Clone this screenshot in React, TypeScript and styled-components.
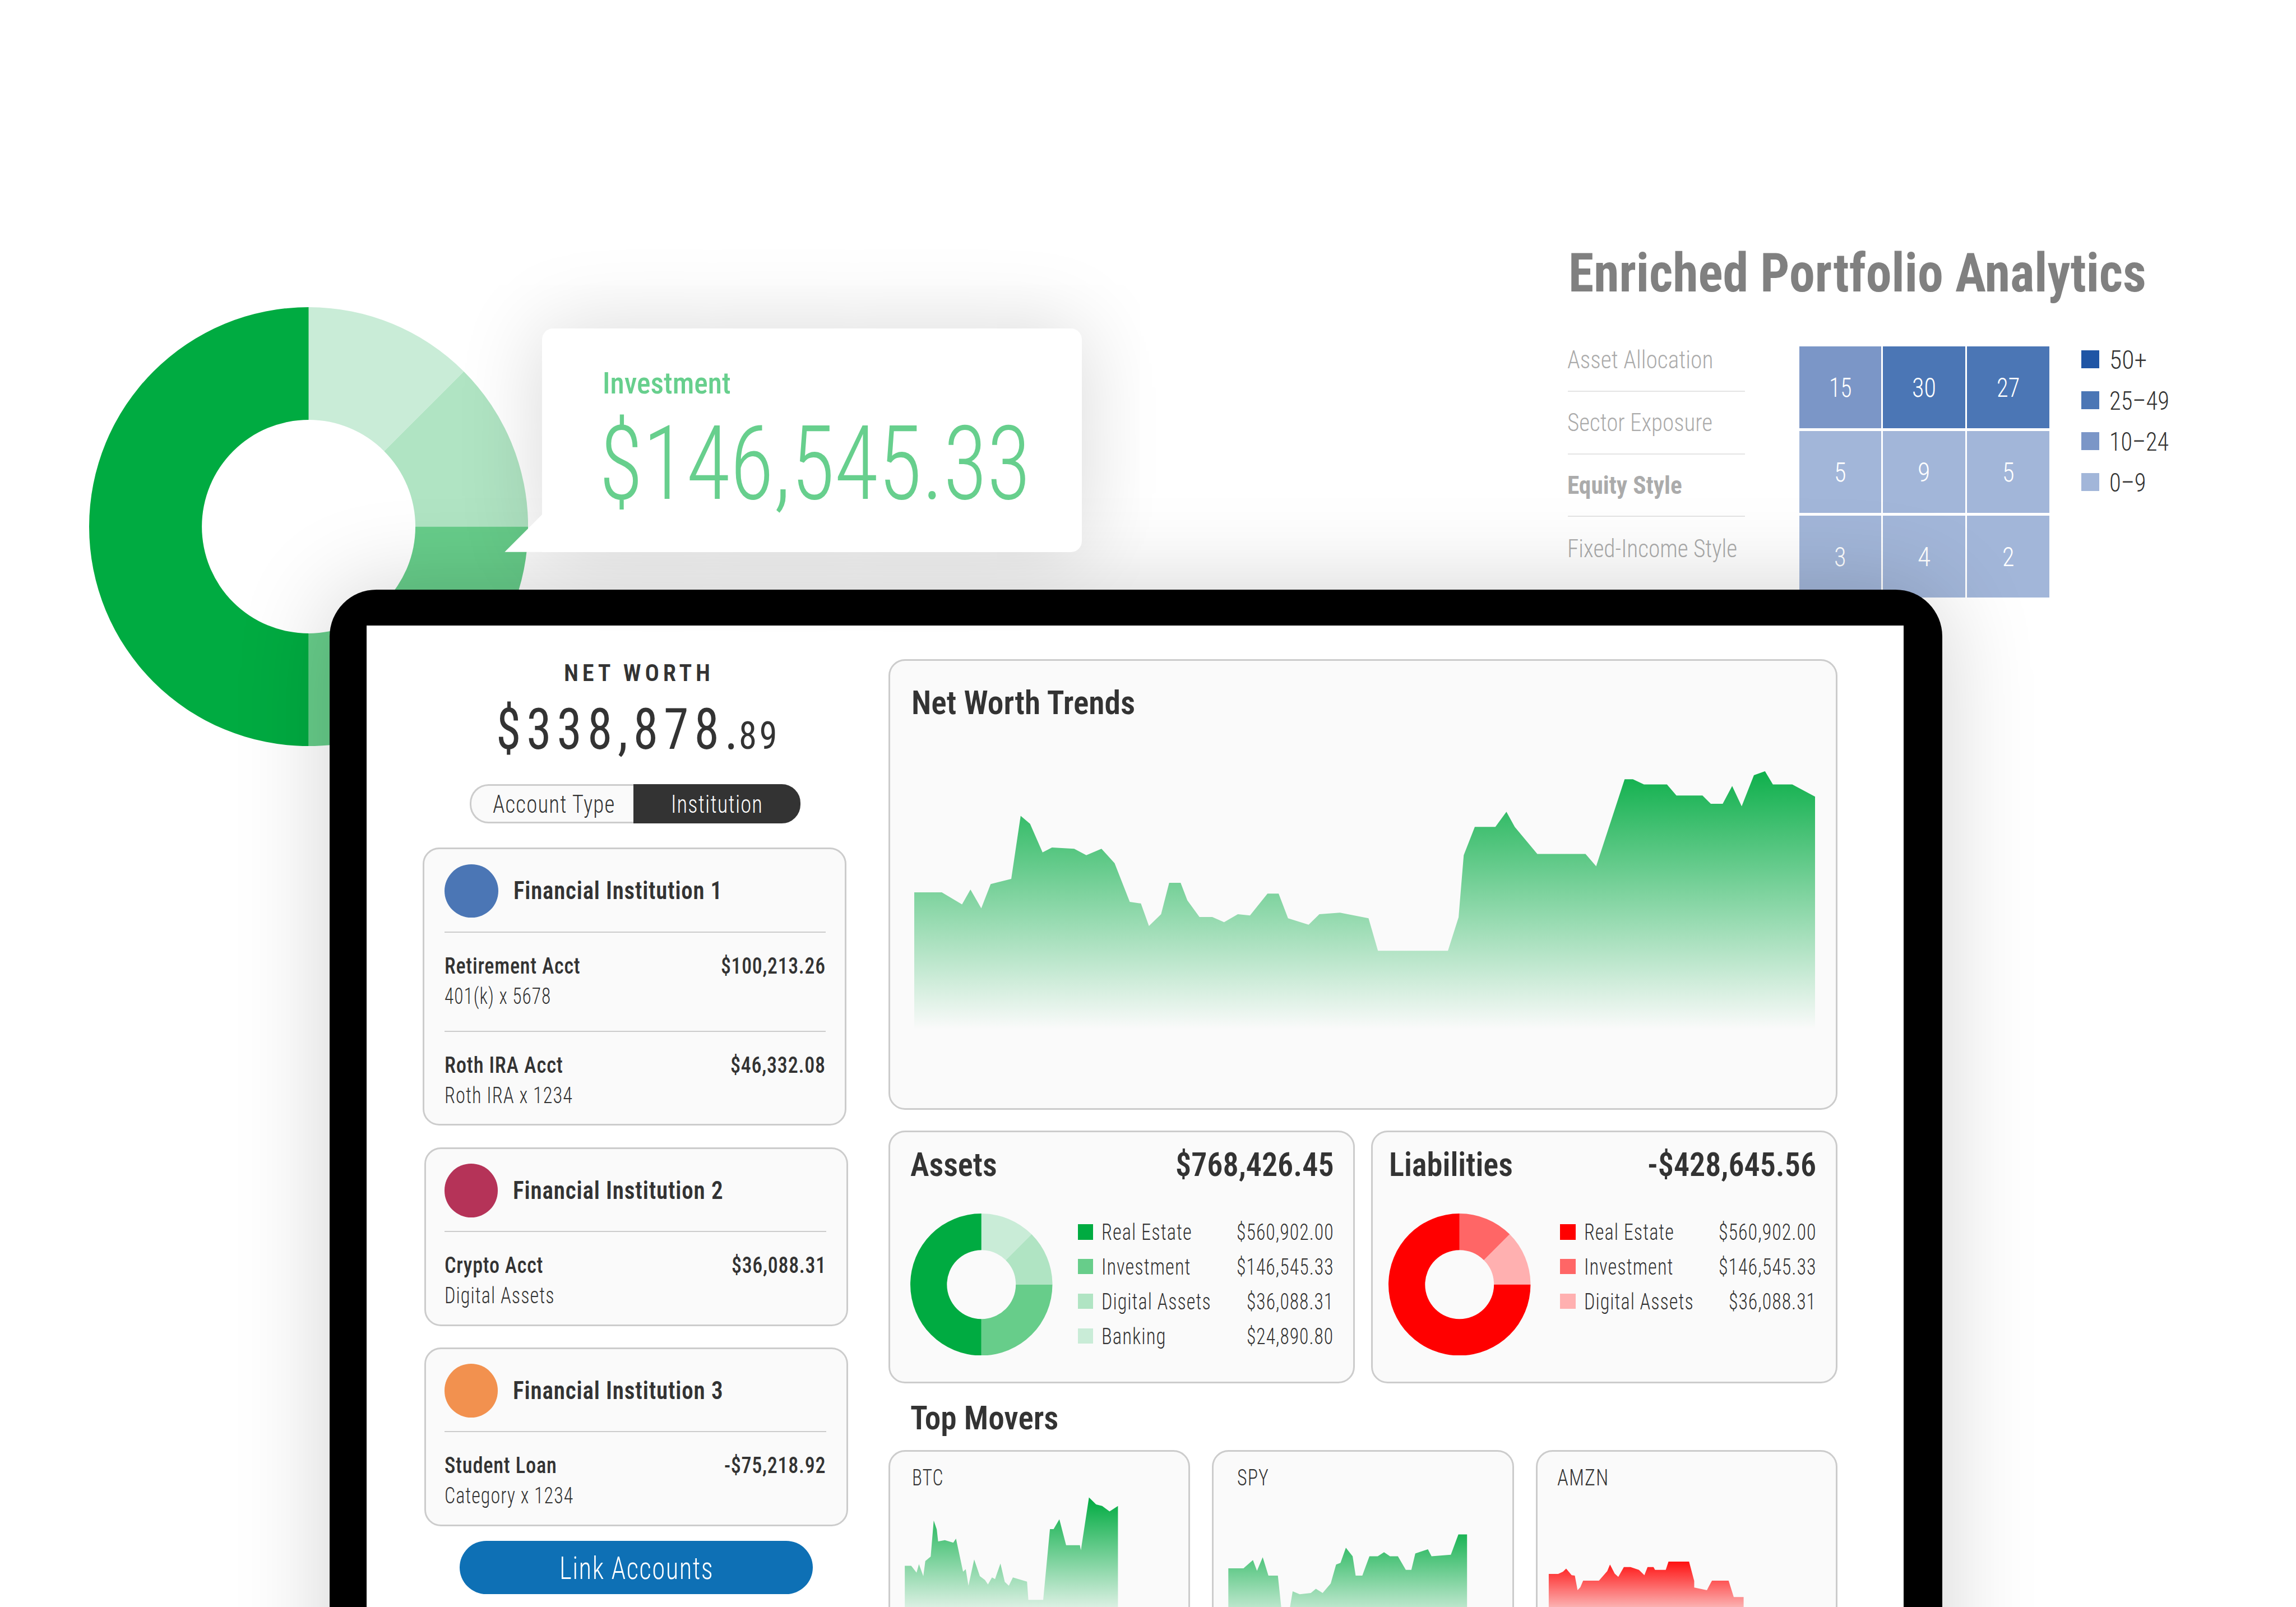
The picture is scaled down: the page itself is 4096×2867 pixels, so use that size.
import React, { useLayoutEffect, useRef, useState } from 'react';
import styled, { createGlobalStyle } from 'styled-components';

// 1rem = 10 design units
const GlobalStyle = createGlobalStyle`
  *, *::before, *::after { box-sizing: border-box; }
  html { font-size: 8.192px; }
  body {
    margin: 0;
    background: #fff;
    color: #333;
    font-family: 'Roboto Condensed', 'Roboto', 'Liberation Sans', sans-serif;
  }
`;

// ── Text ──────────────────────────────────────────────────────
const TextBox = styled.div<{ $w: number }>`
  display: flex;
  flex: none;
  width: calc(${({ $w }) => $w / 10}rem + 0.09em);
  margin: 0 -0.045em;
  line-height: 1;
  white-space: nowrap;
`;

const Run = styled.span`
  display: block;
  flex: none;
  padding-top: 0.03em;
  margin-bottom: -0.03em;
  transform-origin: 0 50%;
`;

const PageTitle    = styled(TextBox)`font-size: 11.88rem; font-weight: 700; color: #808080;`;
const SectionTitle = styled(TextBox)`font-size: 7.15rem; font-weight: 600;`;
const MenuText     = styled(TextBox)<{ $bold?: boolean }>`
  font-size: 5.35rem;
  font-weight: ${({ $bold }) => ($bold ? 700 : 300)};
  color: #ababab;
`;
const CellText     = styled(TextBox)`font-size: 5.8rem; font-weight: 300; color: #fff;`;
const KeyText      = styled(TextBox)`font-size: 5.7rem; font-weight: 300;`;
const CalloutLabel = styled(TextBox)`font-size: 6.6rem; font-weight: 500; color: #67cf8d;`;
const CalloutValue = styled(TextBox)`font-size: 22.5rem; font-weight: 300; color: #67cf8d;`;
const Overline     = styled(TextBox)`font-size: 5.27rem; font-weight: 600; letter-spacing: 0.16em;`;
const WorthText    = styled(TextBox)`font-size: 12.5rem; font-weight: 400; letter-spacing: 0.11em;`;
const CentsText    = styled(TextBox)`font-size: 8.37rem; font-weight: 400; letter-spacing: 0.07em;`;
const ToggleText   = styled(TextBox)`font-size: 5.4rem; font-weight: 300; letter-spacing: 0.03em;`;
const CardTitle    = styled(TextBox)`font-size: 5.4rem; font-weight: 600; letter-spacing: 0.02em;`;
const SmallText    = styled(TextBox)`
  width: calc(${({ $w }) => $w / 10}rem + 0.05em);
  margin-left: 0;
  font-size: 4.88rem;
`;
const StrongText   = styled(SmallText)`font-weight: 500; letter-spacing: 0.02em;`;
const LightText    = styled(SmallText)`font-weight: 300; letter-spacing: 0.03em;`;
const ButtonText   = styled(TextBox)`font-size: 6.7rem; font-weight: 300; letter-spacing: 0.03em; color: #fff;`;

interface FitProps {
  as?:      any;
  w:        number;
  bold?:    boolean;
  children: React.ReactNode;
}

// Stretches a run of text horizontally so it fills the given width
const Fit: React.FC<FitProps> = ({ as: Kind = LightText, w, bold, children }) => {
  const ref = useRef<HTMLSpanElement>(null);
  const [scale, setScale] = useState(1);

  useLayoutEffect(() => {
    const run = ref.current!;
    const tracking = parseFloat(getComputedStyle(run).letterSpacing) || 0;
    const box = run.parentElement!.getBoundingClientRect().width;
    setScale(box / (run.offsetWidth - tracking));
  }, [w]);

  return (
    <Kind $w={w} $bold={bold}>
      <Run ref={ref} style={{ transform: `scaleX(${scale})` }}>{children}</Run>
    </Kind>
  );
};

// ── Stage ─────────────────────────────────────────────────────
const Stage = styled.main`
  position: relative;
  width: 500rem;
  height: 350rem;
  overflow: hidden;
  background: #fff;
`;

const BigDonut = styled.div`
  position: absolute; left: 19.4rem; top: 66.85rem;
`;

const DonutSvg = styled.svg<{ $size: number }>`
  display: block;
  flex: none;
  width: ${({ $size }) => $size / 10}rem;
  height: ${({ $size }) => $size / 10}rem;
`;

// ── Analytics ─────────────────────────────────────────────────
const Analytics = styled.section`
  position: absolute; left: 341.4rem; top: 53.2rem;
  padding-left: 0.7rem;
`;

const AnalyticsBody = styled.div`
  display: flex;
  align-items: flex-start;
  margin: 6.55rem 0 0 -0.7rem;
`;

const Menu = styled.nav`
  width: 38.6rem;
  margin-right: 11.8rem;
`;

const MenuItem = styled.div`
  display: flex; align-items: center;
  height: 13.66rem;
  padding-left: 0.15rem;
  border-bottom: 0.3rem solid #e4e4e4;
  &:last-child { border-bottom: none; }
`;

const HeatGrid = styled.div`
  display: grid;
  grid-template-columns: repeat(3, 17.85rem);
  grid-auto-rows: 17.83rem;
  gap: 0.58rem 0.45rem;
  margin-top: 3.84rem;
`;

const HeatCell = styled.div<{ $bg: string }>`
  display: flex; align-items: center; justify-content: center;
  background: ${({ $bg }) => $bg};
`;

const RangeKey = styled.ul`
  list-style: none;
  margin: 2.2rem 0 0 6.97rem;
  padding: 0;
`;

const RangeItem = styled.li`
  display: flex; align-items: center;
  height: 8.9rem;
  gap: 2.4rem;
`;

const Swatch = styled.span<{ $bg: string; $size?: number }>`
  flex: none;
  width: ${({ $size = 3.95 }) => $size}rem;
  height: ${({ $size = 3.95 }) => $size}rem;
  background: ${({ $bg }) => $bg};
`;

// ── Callout ───────────────────────────────────────────────────
const Callout = styled.aside`
  position: absolute; left: 118rem; top: 71.5rem;
  width: 117.6rem; height: 48.7rem;
  padding: 8.5rem 0 0 13.5rem;
  background: #fff;
  border-radius: 2.4rem 2.4rem 2.4rem 0;
  box-shadow: 0 0 18.5rem rgba(0,0,0,0.16);
  &::before {
    content: '';
    position: absolute; left: -8.1rem; bottom: 0;
    width: 8.3rem; height: 8.3rem;
    background: #fff;
    clip-path: polygon(0 100%, 100% 0, 100% 100%);
  }
`;

const CalloutGap = styled.div`height: 2.4rem;`;

// ── Tablet ────────────────────────────────────────────────────
const Tablet = styled.div`
  position: absolute; left: 71.8rem; top: 128.4rem;
  width: 351.2rem; height: 260rem;
  padding: 7.8rem 8.4rem 0 8rem;
  background: #000;
  border-radius: 10.2rem;
  box-shadow: 0 0 20.5rem rgba(0,0,0,0.18);
`;

const Screen = styled.div`
  display: flex;
  align-items: flex-start;
  height: 100%;
  padding: 0 0 0 12.2rem;
  background: #fff;
`;

const AccountsColumn = styled.div`
  display: flex; flex-direction: column; align-items: center;
  flex: none;
  width: 92.65rem;
  padding-top: 7.6rem;
`;

const InsightsColumn = styled.div`
  flex: none;
  width: 206.65rem;
  margin-left: 8.85rem;
  padding-top: 7.35rem;
`;

const WorthRow = styled.div`
  display: flex; align-items: baseline;
  gap: 1.2rem;
  margin: 3.2rem 0 6.05rem;
  padding-left: 0.8rem;
`;

const OverlineWrap = styled.div`padding-left: 0.8rem;`;

const Toggle = styled.div`
  display: flex;
  height: 8.45rem;
  margin-bottom: 5.25rem;
`;

const ToggleOption = styled.button<{ $active?: boolean }>`
  display: flex; align-items: center; justify-content: center;
  width: ${({ $active }) => ($active ? '36.4rem' : '35.6rem')};
  padding: 0;
  font-family: inherit;
  color: ${({ $active }) => ($active ? '#fff' : '#333')};
  background: ${({ $active }) => ($active ? '#333' : '#fafafa')};
  border: 0.4rem solid ${({ $active }) => ($active ? '#333' : '#ccc')};
  border-radius: ${({ $active }) => ($active ? '0 4.1rem 4.1rem 0' : '4.1rem 0 0 4.1rem')};
  ${({ $active }) => !$active && 'border-right: none; padding-left: 0.4rem;'}
`;

const Panel = styled.section`
  background: #fafafa;
  border: 0.45rem solid #ccc;
  border-radius: 3.6rem;
`;

const InstitutionCard = styled(Panel)<{ $height: number; $gap: number; $first: boolean }>`
  align-self: ${({ $first }) => ($first ? 'flex-start' : 'flex-end')};
  width: 92.3rem;
  height: ${({ $height }) => $height}rem;
  margin-bottom: ${({ $gap }) => $gap}rem;
  padding: ${({ $first }) => ($first ? '3.35rem 4.1rem 0 4.45rem' : '3.2rem 4.35rem 0 4.05rem')};
`;

const InstitutionHead = styled.header`
  display: flex; align-items: center;
  gap: 3.55rem;
  padding-bottom: 3rem;
`;

const TitleNudge = styled.div`padding-bottom: 0.4rem;`;

const Badge = styled.span<{ $bg: string }>`
  flex: none;
  width: 11.65rem; height: 11.65rem;
  border-radius: 50%;
  background: ${({ $bg }) => $bg};
`;

const Account = styled.div`
  height: 21.6rem;
  padding-top: 4.7rem;
  border-top: 0.25rem solid #ccc;
`;

const AccountRow = styled.div`
  display: flex; justify-content: space-between;
  margin-bottom: 1.75rem;
  padding-right: 0.35rem;
`;

const LinkButton = styled.button`
  display: flex; align-items: center; justify-content: center;
  width: 76.9rem; height: 11.6rem;
  margin-left: 0.4rem;
  padding: 0;
  border: none;
  border-radius: 5.8rem;
  background: #0e70b5;
  font-family: inherit;
`;

// ── Insights ──────────────────────────────────────────────────
const TrendsPanel = styled(Panel)`
  height: 98.1rem;
  padding: 5.45rem 0 0 4.95rem;
`;

const TrendsChart = styled.svg`
  display: block;
  width: 196.2rem; height: 56.2rem;
  margin: 11.45rem 0 0 0.3rem;
`;

const BalanceRow = styled.div`
  display: flex; justify-content: space-between;
  margin-top: 4.55rem;
`;

const BalancePanel = styled(Panel)`
  width: 101.6rem; height: 55.03rem;
  padding: 3.4rem 4.6rem 0 0;
`;

const BalanceHead = styled.header<{ $inset: number }>`
  display: flex; justify-content: space-between;
  padding-left: ${({ $inset }) => $inset}rem;
`;

const BalanceBody = styled.div`
  display: flex;
`;

const DonutSlot = styled.div<{ $inset: number }>`
  flex: none;
  width: 40.85rem;
  padding: 7.15rem 0 0 ${({ $inset }) => $inset}rem;
`;

const Legend = styled.ul`
  flex: 1;
  list-style: none;
  margin: 7.4rem 0 0;
  padding: 0;
`;

const LegendItem = styled.li`
  display: flex; align-items: center;
  height: 7.55rem;
  & > :nth-child(2) { margin-left: 1.85rem; }
  & > :last-child { margin-left: auto; }
`;

const MoversTitle = styled.div`
  padding: 3.9rem 0 3.5rem 5.1rem;
`;

const MoversRow = styled.div`
  display: flex; justify-content: space-between;
`;

const MoverPanel = styled(Panel)`
  width: 65.7rem; height: 50rem;
  padding-top: 3.2rem;
`;

const MoverLabel = styled.div<{ $inset: number }>`
  padding-left: ${({ $inset }) => $inset}rem;
`;

const MoverChart = styled.svg`
  display: block;
  width: 64.8rem; height: 29rem;
`;

// ── Data ──────────────────────────────────────────────────────
const GREEN = ['#00ab41', '#67cd8a', '#b0e4c3', '#c9ecd7'];
const RED = ['#ff0000', '#ff6666', '#ffb0b0'];
const BLUE = ['#1f55a5', '#4b76b5', '#7b96c7', '#a2b6d9'];

type Slice = [from: number, to: number, color: string];
type Point = [x: number, y: number];

const assetSlices: Slice[] = [
  [0, 45, GREEN[3]], [45, 90, GREEN[2]], [90, 180, GREEN[1]], [180, 360, GREEN[0]],
];
const liabilitySlices: Slice[] = [
  [0, 45, RED[1]], [45, 90, RED[2]], [90, 360, RED[0]],
];

const menu = [
  { label: 'Asset Allocation', w: 313 },
  { label: 'Sector Exposure', w: 312 },
  { label: 'Equity Style', w: 245, bold: true },
  { label: 'Fixed-Income Style', w: 366 },
];

const cells = [
  { n: '15', w: 44, bg: BLUE[2] }, { n: '30', w: 47, bg: BLUE[1] }, { n: '27', w: 45, bg: BLUE[1] },
  { n: '5', w: 21, bg: BLUE[3] }, { n: '9', w: 22, bg: BLUE[3] }, { n: '5', w: 21, bg: BLUE[3] },
  { n: '3', w: 21, bg: BLUE[3] }, { n: '4', w: 23, bg: BLUE[3] }, { n: '2', w: 21, bg: BLUE[3] },
];

const ranges = [
  { label: '50+', w: 76, bg: BLUE[0] },
  { label: '25–49', w: 125, bg: BLUE[1] },
  { label: '10–24', w: 124, bg: BLUE[2] },
  { label: '0–9', w: 75, bg: BLUE[3] },
];

const institutions = [
  {
    name: 'Financial Institution 1', w: 449, color: '#4b76b5', height: 60.65, gap: 4.75,
    accounts: [
      { name: 'Retirement Acct', nw: 293, amount: '$100,213.26', aw: 225, sub: '401(k) x 5678', sw: 229 },
      { name: 'Roth IRA Acct', nw: 255, amount: '$46,332.08', aw: 204, sub: 'Roth IRA x 1234', sw: 276 },
    ],
  },
  {
    name: 'Financial Institution 2', w: 452, color: '#b53358', height: 38.95, gap: 4.6,
    accounts: [
      { name: 'Crypto Acct', nw: 212, amount: '$36,088.31', aw: 203, sub: 'Digital Assets', sw: 236 },
    ],
  },
  {
    name: 'Financial Institution 3', w: 452, color: '#f2914f', height: 38.95, gap: 3.2,
    accounts: [
      { name: 'Student Loan', nw: 241, amount: '-$75,218.92', aw: 218, sub: 'Category x 1234', sw: 278 },
    ],
  },
];

const balances = [
  {
    title: 'Assets', tw: 182, total: '$768,426.45', aw: 338, inset: 4.65, donutInset: 4.4,
    slices: assetSlices,
    items: [
      { label: 'Real Estate', w: 194, amount: '$560,902.00', aw: 208, bg: GREEN[0] },
      { label: 'Investment', w: 191, amount: '$146,545.33', aw: 208, bg: GREEN[1] },
      { label: 'Digital Assets', w: 235, amount: '$36,088.31', aw: 186, bg: GREEN[2] },
      { label: 'Banking', w: 137, amount: '$24,890.80', aw: 186, bg: GREEN[3] },
    ],
  },
  {
    title: 'Liabilities', tw: 263, total: '-$428,645.56', aw: 361, inset: 3.95, donutInset: 3.5,
    slices: liabilitySlices,
    items: [
      { label: 'Real Estate', w: 193, amount: '$560,902.00', aw: 209, bg: RED[0] },
      { label: 'Investment', w: 191, amount: '$146,545.33', aw: 209, bg: RED[1] },
      { label: 'Digital Assets', w: 235, amount: '$36,088.31', aw: 187, bg: RED[2] },
    ],
  },
];

const trend: Point[] = [
  [1991, 1943.8], [2051, 1943.8], [2095, 1969.9], [2113.4, 1937.7], [2136.9, 1978.6], [2157.4, 1925.7],
  [2202.2, 1914.3], [2222.7, 1777], [2243.2, 1794.4], [2270.4, 1856.7], [2290.9, 1846], [2339.3, 1848.7],
  [2365.7, 1862.7], [2398.7, 1848.7], [2427.3, 1880.1], [2460.3, 1964.5], [2484.5, 1967.9], [2502.1, 2016.8],
  [2528.5, 1991.3], [2546.1, 1923], [2571.1, 1923], [2585.7, 1961.2], [2612.1, 1997.3], [2640, 1997.3],
  [2665.7, 2008.7], [2695.7, 1991.3], [2722.1, 1994], [2760.3, 1946.4], [2784.5, 1946.4], [2805, 2000],
  [2849.8, 2014.1], [2873.2, 1991.3], [2918, 1988], [2980.3, 2000], [3000.8, 2071], [3153.2, 2071],
  [3176.4, 1998], [3187.6, 1862.7], [3211.7, 1801.1], [3256.5, 1801.1], [3280.6, 1768.3], [3298.7, 1801.1],
  [3347.8, 1860], [3452.8, 1860], [3476, 1886.8], [3538, 1697.3], [3556.1, 1697.3], [3580.2, 1708.7],
  [3630.2, 1708.7], [3650.8, 1732.8], [3707.6, 1732.8], [3725.7, 1750.9], [3751.6, 1750.9], [3772.2, 1712.1],
  [3792.9, 1756.3], [3819.6, 1688.6], [3843.7, 1679.9], [3860.9, 1708.7], [3903.1, 1708.7], [3953, 1735.5],
];

const btc: Point[] = [
  [1969.7, 3409.7], [1983.6, 3409.7], [1995.3, 3424.9], [2000.5, 3406.3], [2010, 3432.5], [2014.4, 3399.4],
  [2026.1, 3389.8], [2032.7, 3311.3], [2039.3, 3330.5], [2042.3, 3356.7], [2056.9, 3354], [2075.3, 3359.5],
  [2081.2, 3350.5], [2096.6, 3422.8], [2102.4, 3417.3], [2108.3, 3453.1], [2120.8, 3396], [2133.2, 3432.5],
  [2144.2, 3440.7], [2150.8, 3450.4], [2159.6, 3435.2], [2166.2, 3438.7], [2178, 3404.9], [2187.5, 3444.9],
  [2196.3, 3453.1], [2205.1, 3435.2], [2235.9, 3444.2], [2238.8, 3484.1], [2271.1, 3484.1], [2285.8, 3329.8],
  [2293.8, 3329.8], [2306.3, 3308.5], [2321, 3365], [2351, 3365], [2353.2, 3376], [2370.8, 3261],
  [2386.3, 3276.1], [2399.5, 3279.6], [2415.6, 3291.3], [2433.9, 3279.6],
];

const spy: Point[] = [
  [2673.7, 3415.3], [2706.7, 3415.3], [2727.3, 3397.3], [2736.1, 3420.8], [2748.6, 3391.1], [2761, 3431.1],
  [2781.6, 3431.1], [2788.9, 3500], [2808, 3500], [2813.8, 3465.5], [2829.2, 3471.7], [2853.4, 3469],
  [2864.4, 3460], [2879.1, 3469], [2896.7, 3448.3], [2908.4, 3407], [2918, 3403.5], [2929.7, 3370.5],
  [2944.4, 3389.1], [2951, 3431.1], [2965.5, 3431.1], [2981, 3389.1], [2999.1, 3389.1], [3012.8, 3380.1],
  [3025.8, 3389.1], [3043, 3389.1], [3060.2, 3418.7], [3072.3, 3418.7], [3080.9, 3382.9], [3108.4, 3373.9],
  [3116.2, 3389.1], [3158.3, 3385.6], [3174.7, 3341.6], [3193.6, 3341.6],
];

const amzn: Point[] = [
  [3371.9, 3427.7], [3392.5, 3427.7], [3402.9, 3422.8], [3409.8, 3415.9], [3421.8, 3430.4], [3428.7, 3431.1],
  [3434.7, 3462.8], [3440.7, 3456.6], [3446.8, 3442.1], [3481.2, 3442.1], [3499.3, 3421.4], [3505.3, 3407],
  [3515.6, 3427], [3523.4, 3433.9], [3535.5, 3412.5], [3550, 3412.5], [3568.2, 3418.7], [3580.2, 3430.4],
  [3587.1, 3412.5], [3600, 3412.5], [3603.5, 3418.7], [3626.7, 3418.7], [3632.7, 3400.8], [3677.5, 3400.8],
  [3688.7, 3442.8], [3688.7, 3457.3], [3716.3, 3462.8], [3727.4, 3442.1], [3763.6, 3442.1], [3774.8, 3477.9],
  [3796.3, 3477.9],
];

const movers = [
  { label: 'BTC', w: 65, inset: 4.7, x: 1937.8, points: btc, color: GREEN[0], from: 3262, to: 3535 },
  { label: 'SPY', w: 66, inset: 5.1, x: 2641.6, points: spy, color: GREEN[0], from: 3315, to: 3562 },
  { label: 'AMZN', w: 109, inset: 4.25, x: 3347.6, points: amzn, color: RED[0], from: 3390, to: 3545 },
];

// ── Charts ────────────────────────────────────────────────────
const polar = (r: number, deg: number) => {
  const a = (deg * Math.PI) / 180;
  return `${(r * Math.sin(a)).toFixed(2)} ${(-r * Math.cos(a)).toFixed(2)}`;
};

const Donut = ({ r, inner, slices }: { r: number; inner: number; slices: Slice[] }) => (
  <DonutSvg $size={r * 2} viewBox={`${-r} ${-r} ${r * 2} ${r * 2}`}>
    {slices.map(([a, b, color]) => {
      const large = b - a > 180 ? 1 : 0;
      return (
        <path
          key={a}
          fill={color}
          d={`M${polar(r, a)}A${r} ${r} 0 ${large} 1 ${polar(r, b)}L${polar(inner, b)}A${inner} ${inner} 0 ${large} 0 ${polar(inner, a)}Z`}
        />
      );
    })}
  </DonutSvg>
);

interface AreaProps {
  id:     string;
  points: Point[];
  color:  string;
  from:   number;
  to:     number;
}

const Area = ({ id, points, color, from, to }: AreaProps) => {
  const first = points[0][0];
  const last = points[points.length - 1][0];
  return (
    <>
      <defs>
        <linearGradient id={id} gradientUnits="userSpaceOnUse" x1="0" x2="0" y1={from} y2={to}>
          <stop offset="0" stopColor={color} />
          <stop offset="1" stopColor={color} stopOpacity="0" />
        </linearGradient>
      </defs>
      <polygon
        fill={`url(#${id})`}
        points={[...points, [last, to], [first, to]].map((p) => p.join(',')).join(' ')}
      />
    </>
  );
};

// ── App ───────────────────────────────────────────────────────
const App: React.FC = () => (
  <>
    <GlobalStyle />
    <Stage>
      <BigDonut>
        <Donut r={478} inner={232.5} slices={assetSlices} />
      </BigDonut>

      <Analytics>
        <Fit as={PageTitle} w={1248}>Enriched Portfolio Analytics</Fit>
        <AnalyticsBody>
          <Menu>
            {menu.map((m) => (
              <MenuItem key={m.label}>
                <Fit as={MenuText} w={m.w} bold={m.bold}>{m.label}</Fit>
              </MenuItem>
            ))}
          </Menu>
          <HeatGrid>
            {cells.map((c, i) => (
              <HeatCell key={i} $bg={c.bg}><Fit as={CellText} w={c.w}>{c.n}</Fit></HeatCell>
            ))}
          </HeatGrid>
          <RangeKey>
            {ranges.map((r) => (
              <RangeItem key={r.label}>
                <Swatch $bg={r.bg} />
                <Fit as={KeyText} w={r.w}>{r.label}</Fit>
              </RangeItem>
            ))}
          </RangeKey>
        </AnalyticsBody>
      </Analytics>

      <Tablet>
        <Screen>
          <AccountsColumn>
            <OverlineWrap><Fit as={Overline} w={314}>NET WORTH</Fit></OverlineWrap>
            <WorthRow>
              <Fit as={WorthText} w={515}>$338,878.</Fit>
              <Fit as={CentsText} w={76}>89</Fit>
            </WorthRow>
            <Toggle>
              <ToggleOption><Fit as={ToggleText} w={260}>Account Type</Fit></ToggleOption>
              <ToggleOption $active><Fit as={ToggleText} w={194}>Institution</Fit></ToggleOption>
            </Toggle>

            {institutions.map((inst, i) => (
              <InstitutionCard key={inst.name} $height={inst.height} $gap={inst.gap} $first={i === 0}>
                <InstitutionHead>
                  <Badge $bg={inst.color} />
                  <TitleNudge><Fit as={CardTitle} w={inst.w}>{inst.name}</Fit></TitleNudge>
                </InstitutionHead>
                {inst.accounts.map((a) => (
                  <Account key={a.name}>
                    <AccountRow>
                      <Fit as={StrongText} w={a.nw}>{a.name}</Fit>
                      <Fit as={StrongText} w={a.aw}>{a.amount}</Fit>
                    </AccountRow>
                    <Fit w={a.sw}>{a.sub}</Fit>
                  </Account>
                ))}
              </InstitutionCard>
            ))}

            <LinkButton><Fit as={ButtonText} w={328}>Link Accounts</Fit></LinkButton>
          </AccountsColumn>

          <InsightsColumn>
            <TrendsPanel>
              <Fit as={SectionTitle} w={481}>Net Worth Trends</Fit>
              <TrendsChart viewBox="1991 1680 1962 562">
                <Area id="trend" points={trend} color={GREEN[0]} from={1645} to={2242} />
              </TrendsChart>
            </TrendsPanel>

            <BalanceRow>
              {balances.map((b) => (
                <BalancePanel key={b.title}>
                  <BalanceHead $inset={b.inset}>
                    <Fit as={SectionTitle} w={b.tw}>{b.title}</Fit>
                    <Fit as={SectionTitle} w={b.aw}>{b.total}</Fit>
                  </BalanceHead>
                  <BalanceBody>
                    <DonutSlot $inset={b.donutInset}>
                      <Donut r={154.7} inner={75} slices={b.slices} />
                    </DonutSlot>
                    <Legend>
                      {b.items.map((item) => (
                        <LegendItem key={item.label}>
                          <Swatch $bg={item.bg} $size={3.35} />
                          <Fit w={item.w}>{item.label}</Fit>
                          <Fit w={item.aw}>{item.amount}</Fit>
                        </LegendItem>
                      ))}
                    </Legend>
                  </BalanceBody>
                </BalancePanel>
              ))}
            </BalanceRow>

            <MoversTitle><Fit as={SectionTitle} w={316}>Top Movers</Fit></MoversTitle>
            <MoversRow>
              {movers.map((m) => (
                <MoverPanel key={m.label}>
                  <MoverLabel $inset={m.inset}><Fit w={m.w}>{m.label}</Fit></MoverLabel>
                  <MoverChart viewBox={`${m.x} 3242 648 290`}>
                    <Area id={m.label} points={m.points} color={m.color} from={m.from} to={m.to} />
                  </MoverChart>
                </MoverPanel>
              ))}
            </MoversRow>
          </InsightsColumn>
        </Screen>
      </Tablet>

      <Callout>
        <Fit as={CalloutLabel} w={273}>Investment</Fit>
        <CalloutGap />
        <Fit as={CalloutValue} w={919}>$146,545.33</Fit>
      </Callout>
    </Stage>
  </>
);

export default App;
